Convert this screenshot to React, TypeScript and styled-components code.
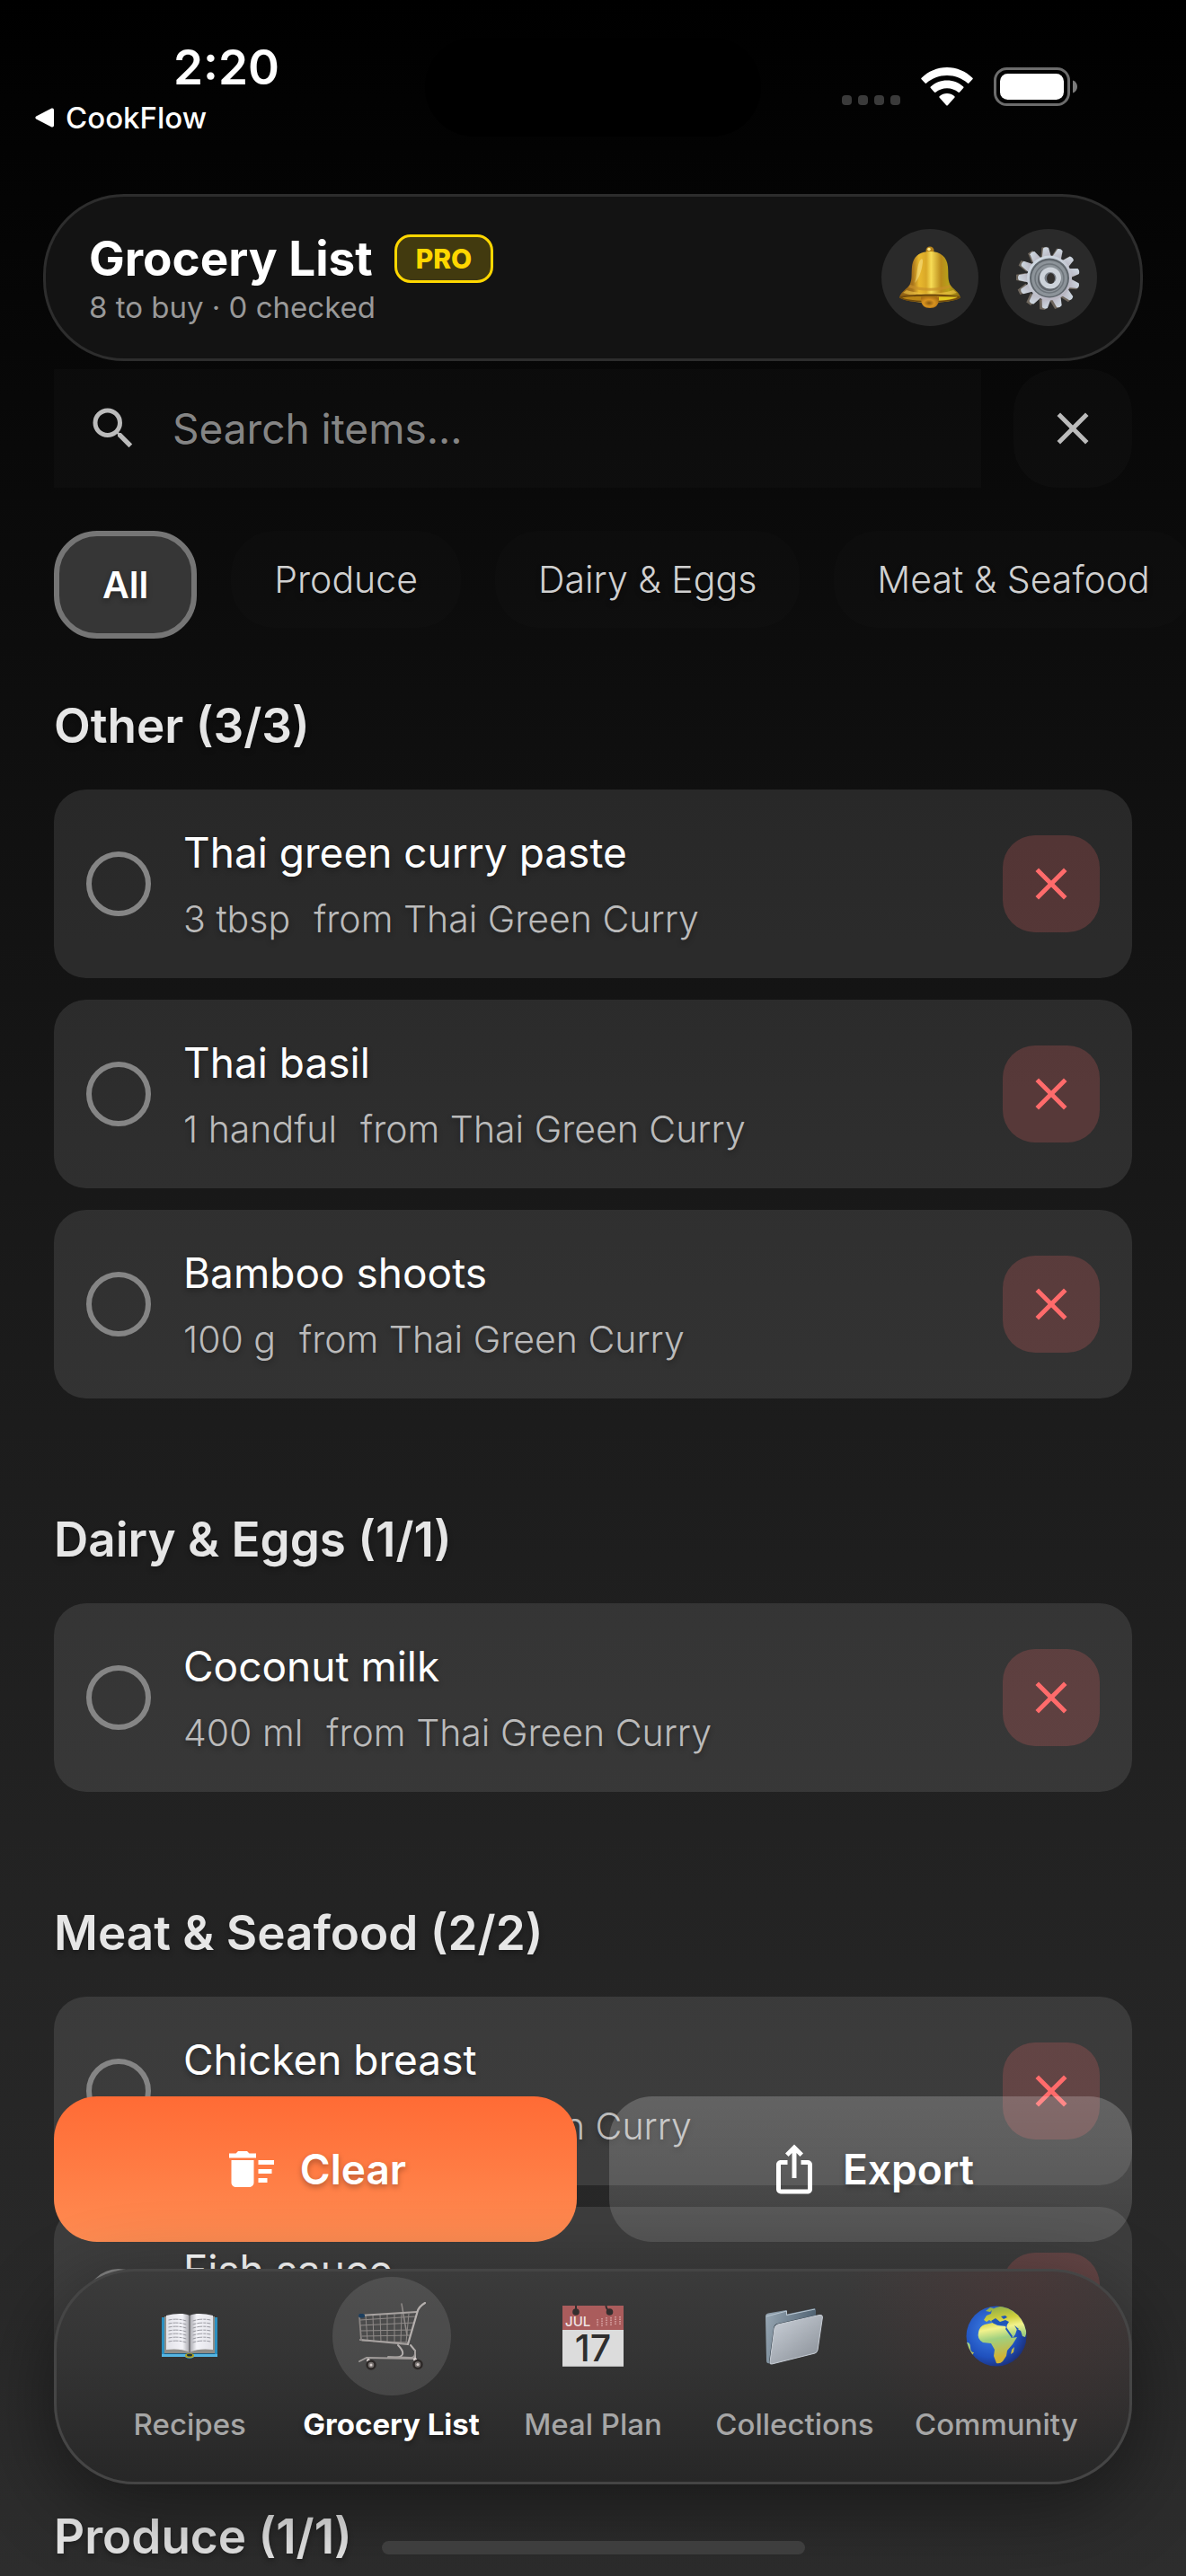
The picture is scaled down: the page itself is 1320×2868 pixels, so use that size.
import React, { useState } from 'react';
import styled, { createGlobalStyle, css } from 'styled-components';
import { MdClose, MdDeleteSweep, MdIosShare, MdSearch } from 'react-icons/md';

interface GroceryItem {
  name: string;
  quantity?: string;
  recipe?: string;
}

interface GrocerySection {
  title: string;
  items: GroceryItem[];
}

const categories = ['All', 'Produce', 'Dairy & Eggs', 'Meat & Seafood'];

const sections: GrocerySection[] = [
  {
    title: 'Other (3/3)',
    items: [
      { name: 'Thai green curry paste', quantity: '3 tbsp', recipe: 'Thai Green Curry' },
      { name: 'Thai basil', quantity: '1 handful', recipe: 'Thai Green Curry' },
      { name: 'Bamboo shoots', quantity: '100 g', recipe: 'Thai Green Curry' },
    ],
  },
  {
    title: 'Dairy & Eggs (1/1)',
    items: [{ name: 'Coconut milk', quantity: '400 ml', recipe: 'Thai Green Curry' }],
  },
  {
    title: 'Meat & Seafood (2/2)',
    items: [
      { name: 'Chicken breast', quantity: '500 g', recipe: 'Thai Green Curry' },
      { name: 'Fish sauce' },
    ],
  },
  { title: 'Produce (1/1)', items: [] },
];

const GlobalStyle = createGlobalStyle`
  * {
    box-sizing: border-box;
  }

  body {
    margin: 0;
    background-color: #000;
    font-family: Inter, 'Liberation Sans', sans-serif;
  }

  button,
  input {
    font-family: inherit;
    border: none;
    margin: 0;
    padding: 0;
  }

  button {
    cursor: pointer;
  }
`;

const Screen = styled.div`
  position: relative;
  height: 100vh;
  overflow: hidden;
  display: flex;
  flex-direction: column;
  color: #fff;
  background: linear-gradient(#000 0%, #1a1a1a 50%, #2d2d2d 100%);
`;

const StatusBar = styled.div`
  display: grid;
  grid-template-columns: 1fr auto 1fr;
  align-items: start;
  flex-shrink: 0;
  height: 216px;
`;

const StatusLeft = styled.div`
  padding: 45px 0 0 39px;
`;

const Time = styled.div`
  padding-left: 154px;
  font-size: 53px;
  font-weight: 600;
  line-height: 60px;
`;

const BackToApp = styled.a`
  display: flex;
  align-items: center;
  gap: 12px;
  margin-top: 8px;
  font-size: 33px;
  font-weight: 500;
  line-height: 36px;
  color: #fff;
  text-decoration: none;
`;

const Island = styled.div`
  width: 374px;
  height: 110px;
  margin-top: 42px;
  border-radius: 55px;
  background-color: #000;
`;

const StatusRight = styled.div`
  display: flex;
  justify-content: flex-end;
  align-items: flex-end;
  gap: 23px;
  height: 118px;
  padding-right: 120px;
`;

const Header = styled.header`
  display: flex;
  align-items: center;
  justify-content: space-between;
  flex-shrink: 0;
  height: 186px;
  margin: 0 48px;
  padding: 0 48px;
  border: 3px solid #2d2d2d;
  border-radius: 90px;
  background-color: #131313;
`;

const TitleRow = styled.div`
  display: flex;
  align-items: center;
  gap: 24px;
`;

const Title = styled.h1`
  margin: 0;
  font-size: 53px;
  font-weight: 700;
  line-height: 66px;
`;

const ProBadge = styled.span`
  padding: 0 21px;
  border: 3px solid #ffd700;
  border-radius: 18px;
  background-color: rgba(255, 215, 0, 0.2);
  color: #ffd700;
  font-size: 30px;
  font-weight: 800;
  line-height: 48px;
`;

const Subtitle = styled.p`
  margin: 0;
  font-size: 33px;
  line-height: 42px;
  color: #999;
`;

const HeaderActions = styled.div`
  display: flex;
  gap: 24px;
`;

const RoundButton = styled.button`
  display: flex;
  align-items: center;
  justify-content: center;
  width: 108px;
  height: 108px;
  border-radius: 50%;
  background-color: #2a2a2a;
`;

const SearchRow = styled.div`
  display: flex;
  flex-shrink: 0;
  gap: 36px;
  margin-top: 9px;
  padding: 0 60px;
`;

const SearchBox = styled.label`
  flex: 1;
  display: flex;
  align-items: center;
  gap: 36px;
  height: 132px;
  padding: 0 36px;
  background-color: rgba(255, 255, 255, 0.02);
  color: #bbb;
`;

const SearchInput = styled.input`
  flex: 1;
  min-width: 0;
  background: transparent;
  color: #fff;
  font-size: 46px;
  line-height: 60px;
  outline: none;

  &::placeholder {
    color: #858585;
    opacity: 1;
  }
`;

const ClearSearchButton = styled.button`
  display: flex;
  align-items: center;
  justify-content: center;
  width: 132px;
  height: 132px;
  border-radius: 48px;
  background-color: rgba(255, 255, 255, 0.02);
  color: #bbb;
`;

const Chips = styled.div`
  display: flex;
  align-items: flex-start;
  flex-shrink: 0;
  gap: 38px;
  height: 120px;
  margin-top: 48px;
  padding: 0 60px;
  overflow: hidden;
`;

const Chip = styled.button<{ $active: boolean }>`
  flex-shrink: 0;
  padding: 27px 48px;
  border-radius: 48px;
  background-color: rgba(255, 255, 255, 0.012);
  color: #d0d0d0;
  font-size: 41px;
  font-weight: 300;
  line-height: 54px;
  text-shadow: 0 3px 6px rgba(0, 0, 0, 0.3);

  ${({ $active }) =>
    $active &&
    css`
      border: 6px solid #757575;
      background-color: #363636;
      color: #fff;
      font-weight: 600;
    `}
`;

const Sections = styled.main`
  display: flex;
  flex-direction: column;
  gap: 120px;
  padding: 60px 60px 0;
`;

const SectionTitle = styled.h2`
  margin: 0 0 34px;
  font-size: 53px;
  font-weight: 600;
  line-height: 74px;
  color: #e6e6e6;
  text-shadow: 0 3px 6px rgba(0, 0, 0, 0.3);
`;

const ItemList = styled.ul`
  display: flex;
  flex-direction: column;
  gap: 24px;
  margin: 0;
  padding: 0;
  list-style: none;
`;

const ItemCard = styled.li`
  display: flex;
  align-items: center;
  gap: 36px;
  padding: 36px;
  border-radius: 36px;
  background-color: rgba(255, 255, 255, 0.1);
`;

const ItemLabel = styled.label`
  flex: 1;
  display: flex;
  align-items: center;
  gap: 36px;
  cursor: pointer;
`;

const Check = styled.input`
  appearance: none;
  width: 72px;
  height: 72px;
  border: 6px solid #858585;
  border-radius: 50%;

  &:checked {
    background-color: #ff6b35;
    border-color: #ff6b35;
  }
`;

const ItemText = styled.span`
  display: flex;
  flex-direction: column;
  gap: 10px;
  text-shadow: 0 3px 6px rgba(0, 0, 0, 0.3);
`;

const ItemName = styled.span`
  font-size: 46px;
  font-weight: 400;
  line-height: 68px;
`;

const ItemMeta = styled.span`
  display: flex;
  gap: 26px;
  min-height: 60px;
  color: #bbb;
  font-size: 41px;
  font-weight: 300;
  line-height: 60px;
`;

const DeleteButton = styled.button`
  display: flex;
  align-items: center;
  justify-content: center;
  width: 108px;
  height: 108px;
  border-radius: 36px;
  background-color: rgba(255, 107, 107, 0.2);
  color: #ff6b6b;
`;

const Dock = styled.div`
  position: absolute;
  left: 0;
  right: 0;
  bottom: 0;
  display: flex;
  flex-direction: column;
  padding: 0 60px 24px;
`;

const Actions = styled.div`
  display: flex;
  gap: 36px;
  margin-bottom: 30px;
`;

const ActionButton = styled.button<{ $primary?: boolean }>`
  flex: 1;
  display: flex;
  align-items: center;
  justify-content: center;
  gap: 24px;
  height: 162px;
  border-radius: 48px;
  background: ${({ $primary }) =>
    $primary
      ? 'linear-gradient(#ff6b35, #ff8c52)'
      : 'linear-gradient(rgba(255, 255, 255, 0.2), rgba(255, 255, 255, 0.12))'};
  color: #fff;
  font-size: 46px;
  font-weight: 600;
  text-shadow: 0 3px 6px rgba(0, 0, 0, 0.3);
`;

const NavBar = styled.nav`
  display: flex;
  height: 240px;
  padding: 6px 36px 0;
  border: 3px solid #454545;
  border-radius: 90px;
  background:
    radial-gradient(circle 210px at 91% 5%, rgba(120, 50, 50, 0.2), rgba(120, 50, 50, 0)),
    linear-gradient(#3b3b3b 0%, #333 45%, #272727 100%);
  box-shadow: 0 24px 90px rgba(0, 0, 0, 0.45);
`;

const NavItem = styled.a<{ $active: boolean }>`
  flex: 1 1 0;
  display: flex;
  flex-direction: column;
  align-items: center;
  gap: 11px;
  color: ${({ $active }) => ($active ? '#fff' : '#a6a6a6')};
  font-size: 33px;
  font-weight: ${({ $active }) => ($active ? 700 : 500)};
  line-height: 42px;
  text-decoration: none;
  white-space: nowrap;
  text-shadow: ${({ $active }) => ($active ? '0 3px 6px rgba(0, 0, 0, 0.4)' : 'none')};
`;

const NavIcon = styled.span<{ $active: boolean }>`
  display: flex;
  align-items: center;
  justify-content: center;
  width: 132px;
  height: 132px;
  border-radius: 50%;
  background-color: ${({ $active }) => ($active ? 'rgba(255, 255, 255, 0.11)' : 'transparent')};
`;

const HomeIndicator = styled.div`
  align-self: center;
  width: 471px;
  height: 15px;
  margin-top: 63px;
  border-radius: 8px;
  background-color: #3e3e3e;
`;

const BackArrow = () => (
  <svg width="22" height="22" viewBox="0 0 22 22">
    <path d="M1.2 9.6 18.5.6Q21 0 21 2.500V19.500Q21 22 18.500 21.400L1.200 12.400Q-.5 11 1.200 9.600z" fill="#fff" />
  </svg>
);

const SignalDots = () => (
  <svg width="65" height="12" viewBox="0 0 65 12">
    {[0, 18, 36, 54].map((x) => (
      <rect key={x} x={x} y="0" width="11" height="11" rx="4" fill="#3a3a3a" />
    ))}
  </svg>
);

const WifiIcon = () => (
  <svg width="58" height="43" viewBox="0 0 58 43">
    <g fill="#fff">
      <path d="M29 0C18 0 8 4.500.600 11.700q-.8.800 0 1.600l4 4.300q.8.700 1.600 0C12.300 12 20.300 9 29 9s16.700 3 22.800 8.600q.8.700 1.600 0l4-4.300q.8-.8 0-1.600C50 4.500 40 0 29 0z" />
      <path d="M29 14.500c-7 0-13.300 2.600-18.200 7q-.8.800 0 1.600l4 4.500q.8.800 1.600.1C20 25 24.300 23.300 29 23.300s9 1.700 12.600 4.400q.8.700 1.600-.1l4-4.500q.8-.8 0-1.600c-4.900-4.400-11.200-7-18.200-7z" />
      <path d="M29 29c-3.100 0-6 1.100-8.200 3q-.9.800-.1 1.700l7.300 8.400q1 1 2 0l7.300-8.400q.8-.9-.1-1.700c-2.200-1.900-5.100-3-8.200-3z" />
    </g>
  </svg>
);

const BatteryIcon = () => (
  <svg width="94" height="43" viewBox="0 0 94 43">
    <rect x="1.500" y="1.500" width="82" height="40" rx="13" fill="none" stroke="#6c6c6c" strokeWidth="3" />
    <rect x="7" y="7" width="71" height="29" rx="8.500" fill="#fff" />
    <path d="M88 14.500c3.300 1 5 3.700 5 7s-1.700 6-5 7z" fill="#7a7a7a" />
  </svg>
);

const BellIcon = () => (
  <svg width="72" height="72" viewBox="0 0 72 72">
    <defs>
      <linearGradient id="bellBody" x1="0" x2="1" y1="0" y2="0">
        <stop offset="0" stopColor="#8a5c14" />
        <stop offset="0.22" stopColor="#a8741c" />
        <stop offset="0.32" stopColor="#e9b92e" />
        <stop offset="0.44" stopColor="#d9a828" />
        <stop offset="0.52" stopColor="#f7dc55" />
        <stop offset="0.68" stopColor="#b98a1b" />
        <stop offset="0.8" stopColor="#b7a01a" />
        <stop offset="1" stopColor="#8d6b10" />
      </linearGradient>
      <radialGradient id="bellClapper" cx="0.45" cy="0.55" r="0.6">
        <stop offset="0" stopColor="#8a5a12" />
        <stop offset="0.5" stopColor="#d8931f" />
        <stop offset="1" stopColor="#a86c14" />
      </radialGradient>
    </defs>
    <circle cx="36" cy="6" r="4.500" fill="#b5821a" />
    <circle cx="35" cy="4.500" r="1.800" fill="#ffe98a" />
    <path
      d="M36 7c-12 0-19 6-20 17-.8 9 .4 14-2.500 20C10.500 49 3 52 2 58.500 9 62.500 24 64 36 64s27-1.500 34-5.500C69 52 61.500 49 58.500 44c-2.900-6-1.700-11-2.500-20C55 13 48 7 36 7z"
      fill="url(#bellBody)"
    />
    <path d="M14 44c13 5 31 5 44 0l2 3c-14 5-34 5-48 0z" fill="#c8902a" opacity="0.7" />
    <path d="M10 50c16 5 36 5 52 0l4 3c-18 6-42 6-60 0z" fill="#f3c948" opacity="0.6" />
    <path d="M2 57.500c10-4 58-4 68 0-1 4-16 6-34 6s-33-2-34-6z" fill="#6f4a0c" />
    <path d="M5 58.500c12-2.500 50-2.500 62 0-7 2.500-18 3.500-31 3.500S12 61 5 58.500z" fill="#b98515" />
    <path d="M44 57.500h23c-6 3-14 3.800-23 4z" fill="#e0c81f" />
    <path d="M26 57.500h20v3q-.5 9.500-10 9.500t-10-9.500z" fill="url(#bellClapper)" />
    <path d="M24 19c-3 7-2 15-5 23 5-5 8-14 9-23 .5-5-2-5-4 0z" fill="#fff0a0" opacity="0.45" />
  </svg>
);

const GearIcon = () => (
  <svg width="72" height="72" viewBox="0 0 72 72">
    <defs>
      <linearGradient id="gearRing" x1="0" x2="0.5" y1="0" y2="1">
        <stop offset="0" stopColor="#d3dfe8" />
        <stop offset="1" stopColor="#b9b7c2" />
      </linearGradient>
    </defs>
    <g fill="#6d655c">
      {Array.from({ length: 13 }, (_, i) => (
        <path key={i} d="M30 13 32 2h6L40 13z" transform={`rotate(${i * 27.7 - 6} 34.500 37)`} />
      ))}
    </g>
    <g fill="url(#gearRing)">
      {Array.from({ length: 13 }, (_, i) => (
        <path key={i} d="M31 14 33.500 3q3-2 6 0l2 11z" transform={`rotate(${i * 27.7 - 6} 36.500 36.500)`} />
      ))}
    </g>
    <circle cx="37" cy="36.500" r="25" fill="url(#gearRing)" />
    <circle cx="37" cy="36.500" r="22" fill="#5f666c" />
    <circle cx="37" cy="37" r="20" fill="#8c9399" />
    <circle cx="37" cy="37" r="16" fill="none" stroke="#6d747a" strokeWidth="1.500" />
    <circle cx="37" cy="38" r="13" fill="#62676d" />
    <circle cx="38" cy="36.500" r="12" fill="#cdd3da" />
    <circle cx="38" cy="36.500" r="6.500" fill="#777d85" />
    <ellipse cx="38.500" cy="37" rx="4.500" ry="6" fill="#33312f" />
  </svg>
);

const BookIcon = () => (
  <svg width="72" height="72" viewBox="0 0 72 72">
    <defs>
      <linearGradient id="pageLeft" x1="0" x2="1" y1="0" y2="0">
        <stop offset="0" stopColor="#e2e2e8" />
        <stop offset="0.7" stopColor="#f3f3f8" />
        <stop offset="1" stopColor="#a5a5ab" />
      </linearGradient>
      <linearGradient id="pageRight" x1="0" x2="1" y1="0" y2="0">
        <stop offset="0" stopColor="#a5a5ab" />
        <stop offset="0.300" stopColor="#f3f3f8" />
        <stop offset="1" stopColor="#e2e2e8" />
      </linearGradient>
    </defs>
    <path d="M5 15h62v44H41q-5 3-10 0H5z" fill="#2b8fc0" />
    <path d="M5 56h62v3H41q-5 3-10 0H5z" fill="#56b5e2" />
    <path d="M8 54h56v2H8z" fill="#1b5e85" />
    <path d="M8 14h56v41H8z" fill="#8f8d88" />
    <path d="M10 13c9-2 19-3 26 0v41c-7-4-18-4-26-3z" fill="url(#pageLeft)" />
    <path d="M36 13c7-3 17-2 26 0v38c-8-1-19-1-26 3z" fill="url(#pageRight)" />
    <path d="M36 13v41" stroke="#6b6b70" strokeWidth="1.500" />
    <g stroke="#9a9aa2" strokeWidth="1" fill="none" strokeDasharray="4 1 6 1 3 1">
      {[18, 22, 26, 30, 34, 38, 42].map((y) => (
        <path key={y} d={`M12.500 ${y}c7-1.500 14-1 20 1M39.500 ${y + 1}c6-2 13-2.500 20-1`} />
      ))}
    </g>
    <ellipse cx="36" cy="57.500" rx="5" ry="2.500" fill="#b5a318" />
    <ellipse cx="36" cy="57" rx="3" ry="1.500" fill="#1c3340" />
  </svg>
);

const CartIcon = () => (
  <svg width="76" height="76" viewBox="0 0 76 76" fill="none" strokeLinecap="round">
    <g stroke="#8f8a88" strokeWidth="1">
      <path d="M3 20 65 16M3 26l60-3M4 32l57-1M5 38l54-1M5 43l52 2" />
      <path d="M9 15l2 28M17 15l1 29M25 14l1 30M33 14v31M41 14v31M49 13l-1 32M57 13l-3 32" />
      <path d="M49 2l6 35" strokeWidth="1.500" />
    </g>
    <path d="M2 15 66 11M3 42l53 5" stroke="#a8a3a1" strokeWidth="1.800" />
    <path d="M2 16 4 42" stroke="#8b8684" strokeWidth="1.800" />
    <path d="M75 1q-7 4-8.500 10L56 47" stroke="#b5b0ae" strokeWidth="2.200" />
    <path d="M45 48c7 7 8 13-3 14M59 48l5 6v10" stroke="#b5b0ae" strokeWidth="2" />
    <path d="M2 66l8-4 53 1M34 61l25 1q6 0 5-8" stroke="#a19c9a" strokeWidth="1.800" />
    <rect x="1" y="13" width="7" height="4.500" rx="2" fill="#1c3e5e" />
    <path d="M12 65l4 6M64 64l4 6" stroke="#d8cfcd" strokeWidth="4" />
    <circle cx="15" cy="70" r="4.500" fill="#777270" stroke="#2c2827" strokeWidth="2.500" />
    <circle cx="67" cy="69.500" r="4.500" fill="#777270" stroke="#2c2827" strokeWidth="2.500" />
    <circle cx="15" cy="70" r="1.500" fill="#d8cfcd" />
    <circle cx="67" cy="69.500" r="1.500" fill="#d8cfcd" />
  </svg>
);

const CalendarIcon = () => (
  <svg width="72" height="72" viewBox="0 0 72 72" fontFamily="Inter, sans-serif">
    <rect x="2" y="2" width="68" height="68" fill="#dcdcdc" />
    <rect x="2" y="2" width="68" height="27" fill="#aa5c5c" />
    <path d="M2 69.500h68" stroke="#b5b5b5" />
    <circle cx="17" cy="9" r="3.800" fill="#332e2e" />
    <circle cx="54.500" cy="9" r="3.800" fill="#332e2e" />
    <path d="M17 2v7M50.500 2q0 4 4 6" stroke="#332e2e" strokeWidth="2" fill="none" />
    <text x="5" y="25" fontSize="15" fill="#f0e4e4">JUL</text>
    <g stroke="#d9a5a5" strokeWidth="1.500" strokeDasharray="1.500 1">
      <path d="M41 17v8M46 16v9M51 15v10M56 15v10M61 14v10M66 14v9" />
    </g>
    <text x="36" y="64" fontSize="41" textAnchor="middle" fill="#2e2e2e">17</text>
  </svg>
);

const FolderIcon = () => (
  <svg width="72" height="72" viewBox="0 0 72 72">
    <defs>
      <linearGradient id="folderFront" x1="0" x2="0.800" y1="0" y2="1">
        <stop offset="0" stopColor="#cdd3db" />
        <stop offset="1" stopColor="#8c929a" />
      </linearGradient>
      <linearGradient id="folderBack" x1="0" x2="1" y1="0" y2="0.300">
        <stop offset="0" stopColor="#9aa9b5" />
        <stop offset="1" stopColor="#4d6070" />
      </linearGradient>
    </defs>
    <path d="M4 14q0-3 3-3.500L27 7q1 0 1 2v2.500L58 5q2 0 2 2v30L9 66q-4 1-4-3z" fill="url(#folderBack)" />
    <path d="M5 14 27.500 8v4.500L59 6" fill="none" stroke="#b8c6d1" />
    <path d="M13 27q.5-4 4-5L63 12q4-1 4 2l-5.500 37q-.5 3-3 4L10 67q-2.500 0-2-3z" fill="#3b4650" />
    <path d="M14 27q.5-3 3.500-4L64 12.500q3.500-.5 3.500 2L62 51.500q-.5 2.500-3 3.500L11 67q-2.500.5-2-2z" fill="url(#folderFront)" stroke="#c8ced6" strokeWidth="1" />
  </svg>
);

const GlobeIcon = () => (
  <svg width="72" height="72" viewBox="0 0 72 72">
    <defs>
      <radialGradient id="ocean" cx="0.400" cy="0.400" r="0.650">
        <stop offset="0" stopColor="#3f83ea" />
        <stop offset="0.700" stopColor="#1f50bd" />
        <stop offset="1" stopColor="#1b2f78" />
      </radialGradient>
      <linearGradient id="land" gradientUnits="userSpaceOnUse" x1="30" x2="40" y1="4" y2="60">
        <stop offset="0" stopColor="#8fae4a" />
        <stop offset="0.250" stopColor="#d0cf3c" />
        <stop offset="0.420" stopColor="#f2f28c" />
        <stop offset="0.620" stopColor="#a0d080" />
        <stop offset="1" stopColor="#d0b235" />
      </linearGradient>
      <clipPath id="globeClip">
        <circle cx="36" cy="36" r="33.500" />
      </clipPath>
    </defs>
    <circle cx="36" cy="36" r="33.500" fill="url(#ocean)" />
    <g clipPath="url(#globeClip)" fill="url(#land)">
      <path d="M16 32q1-7 7-9l9-2 5 3 9 1 3 5 4 8 6-1-5 8-6 7-1 6-4 6q-3 3-7 2l-3-8 1-7-4-7-9-1q-7-4-5-11z" />
      <path d="M22 18l3-5 5-2 1-5 5-2 8-2 12 5 9 9 5 14-2 7-3-1-2-6-4-2-2 6-3 4-7-10 1-5-7-1-4-3-6 1-3-2-3 2z" />
      <path d="M0 43q7-1 7 5t4 6l-3 5-8-8z" />
      <path d="M53 51l3-3-1 6-3 2z" />
      <path d="M24 8l5-4 4 1-4 4z" />
    </g>
    <path d="M30 19l5-3 5 4 6-2 4 2-2 3-7 1-8-2zM41 14l5-1 2 2-4 2zM47 26l7 10-1 2-7-10zM56 24l5 4-2 1z" fill="#2056b8" />
  </svg>
);

const navItems = [
  { label: 'Recipes', Icon: BookIcon },
  { label: 'Grocery List', Icon: CartIcon },
  { label: 'Meal Plan', Icon: CalendarIcon },
  { label: 'Collections', Icon: FolderIcon },
  { label: 'Community', Icon: GlobeIcon },
];

export const App: React.FC = () => {
  const [search, setSearch] = useState('');
  const [category, setCategory] = useState('All');

  return (
    <>
      <GlobalStyle />
      <Screen>
        <StatusBar>
          <StatusLeft>
            <Time>2:20</Time>
            <BackToApp href="#cookflow">
              <BackArrow />
              CookFlow
            </BackToApp>
          </StatusLeft>
          <Island />
          <StatusRight>
            <SignalDots />
            <WifiIcon />
            <BatteryIcon />
          </StatusRight>
        </StatusBar>

        <Header>
          <div>
            <TitleRow>
              <Title>Grocery List</Title>
              <ProBadge>PRO</ProBadge>
            </TitleRow>
            <Subtitle>8 to buy · 0 checked</Subtitle>
          </div>
          <HeaderActions>
            <RoundButton aria-label="Notifications">
              <BellIcon />
            </RoundButton>
            <RoundButton aria-label="Settings">
              <GearIcon />
            </RoundButton>
          </HeaderActions>
        </Header>

        <SearchRow>
          <SearchBox htmlFor="search">
            <MdSearch size={60} />
            <SearchInput
              id="search"
              type="text"
              placeholder="Search items..."
              value={search}
              onChange={(event) => setSearch(event.target.value)}
            />
          </SearchBox>
          <ClearSearchButton aria-label="Clear search" onClick={() => setSearch('')}>
            <MdClose size={60} />
          </ClearSearchButton>
        </SearchRow>

        <Chips>
          {categories.map((name) => (
            <Chip key={name} $active={name === category} onClick={() => setCategory(name)}>
              {name}
            </Chip>
          ))}
        </Chips>

        <Sections>
          {sections.map((section) => (
            <section key={section.title}>
              <SectionTitle>{section.title}</SectionTitle>
              <ItemList>
                {section.items.map((item) => (
                  <ItemCard key={item.name}>
                    <ItemLabel>
                      <Check type="checkbox" />
                      <ItemText>
                        <ItemName>{item.name}</ItemName>
                        <ItemMeta>
                          {item.quantity && <span>{item.quantity}</span>}
                          {item.recipe && <span>from {item.recipe}</span>}
                        </ItemMeta>
                      </ItemText>
                    </ItemLabel>
                    <DeleteButton aria-label={`Remove ${item.name}`}>
                      <MdClose size={60} />
                    </DeleteButton>
                  </ItemCard>
                ))}
              </ItemList>
            </section>
          ))}
        </Sections>

        <Dock>
          <Actions>
            <ActionButton $primary>
              <MdDeleteSweep size={60} />
              Clear
            </ActionButton>
            <ActionButton>
              <MdIosShare size={60} />
              Export
            </ActionButton>
          </Actions>
          <NavBar>
            {navItems.map(({ label, Icon }) => (
              <NavItem key={label} href="#" $active={label === 'Grocery List'}>
                <NavIcon $active={label === 'Grocery List'}>
                  <Icon />
                </NavIcon>
                {label}
              </NavItem>
            ))}
          </NavBar>
          <HomeIndicator />
        </Dock>
      </Screen>
    </>
  );
};

export default App;
